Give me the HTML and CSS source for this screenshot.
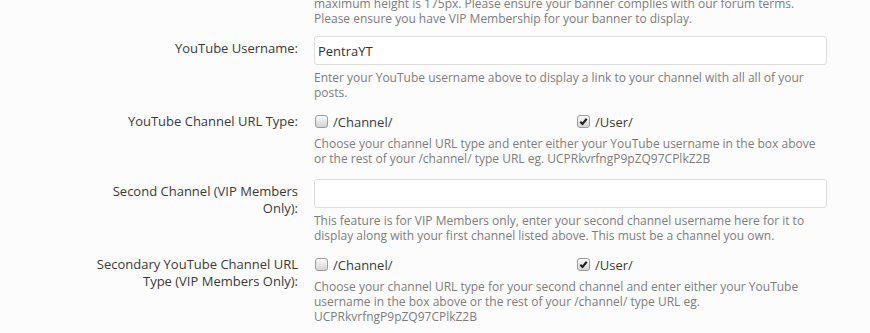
FILE: index.html
```html
<!DOCTYPE html>
<html lang="en">
  <head>
    <meta charset="UTF-8" />
    <title>Preferences</title>
    <link rel="stylesheet" href="styles.css">
  </head>
  <body>
    <form class="prefs">
      <div class="row row-top">
        <div class="label"></div>
        <div class="field">
          <p class="hint">maximum height is 175px. Please ensure your banner complies with our forum terms.<br>Please ensure you have VIP Membership for your banner to display.</p>
        </div>
      </div>

      <div class="row">
        <label class="label label-input" for="yt-user">YouTube Username:</label>
        <div class="field">
          <input id="yt-user" class="text-input" type="text" value="PentraYT" />
          <p class="hint">Enter your YouTube username above to display a link to your channel with all all of your posts.</p>
        </div>
      </div>

      <div class="row">
        <div class="label">YouTube Channel URL Type:</div>
        <div class="field">
          <div class="choices">
            <span class="choice"><span class="check"></span>/Channel/</span>
            <span class="choice"><span class="check checked"><svg viewBox="0 0 12 12"><path d="M2.5 6.3 L4.9 8.7 L9.5 3" /></svg></span>/User/</span>
          </div>
          <p class="hint">Choose your channel URL type and enter either your YouTube username in the box above or the rest of your /channel/ type URL eg. UCPRkvrfngP9pZQ97CPlkZ2B</p>
        </div>
      </div>

      <div class="row">
        <label class="label label-input" for="yt-second">Second Channel (VIP Members Only):</label>
        <div class="field">
          <input id="yt-second" class="text-input" type="text" value="" />
          <p class="hint">This feature is for VIP Members only, enter your second channel username here for it to display along with your first channel listed above. This must be a channel you own.</p>
        </div>
      </div>

      <div class="row">
        <div class="label">Secondary YouTube Channel URL Type (VIP Members Only):</div>
        <div class="field">
          <div class="choices">
            <span class="choice"><span class="check"></span>/Channel/</span>
            <span class="choice"><span class="check checked"><svg viewBox="0 0 12 12"><path d="M2.5 6.3 L4.9 8.7 L9.5 3" /></svg></span>/User/</span>
          </div>
          <p class="hint">Choose your channel URL type for your second channel and enter either your YouTube username in the box above or the rest of your /channel/ type URL eg. UCPRkvrfngP9pZQ97CPlkZ2B</p>
        </div>
      </div>
    </form>
  </body>
</html>
```

FILE: styles.css
```css
body {
  margin: 0;
  background: #fcfcfc;
  font-family: 'Open Sans', sans-serif;
  color: #3a3a3a;
  overflow: hidden;
}

.prefs {
  padding-left: 88px;
}

.row {
  display: grid;
  grid-template-columns: 210px 513px;
  column-gap: 16px;
  margin-bottom: 13px;
}

.row-top {
  margin-top: -4px;
  margin-bottom: 10px;
}

.row-top .hint {
  margin-top: 0;
}

.label {
  text-align: right;
  font-size: 13px;
  line-height: 17px;
}

.label-input {
  padding-top: 4px;
}

.text-input {
  display: block;
  box-sizing: border-box;
  width: 100%;
  height: 29px;
  margin: 0;
  padding: 0 3px;
  border: 1px solid #dcdcdc;
  border-radius: 3px;
  background: #fff;
  font-family: 'Open Sans', sans-serif;
  font-size: 13px;
  color: #333;
  outline: none;
}

.hint {
  margin: 5px 0 0;
  font-size: 12px;
  line-height: 15px;
  color: #7d7d7d;
}

.choices {
  display: grid;
  grid-template-columns: 262px auto;
  padding-top: 1px;
  font-size: 13px;
  line-height: 17px;
}

.choice {
  display: flex;
  align-items: center;
}

.check {
  box-sizing: border-box;
  width: 13px;
  height: 13px;
  margin: 0 5px 2px 1px;
  border: 1px solid #9c9c9c;
  border-radius: 3px;
  background: linear-gradient(#fafafa, #d4d4d4);
  display: flex;
  align-items: center;
  justify-content: center;
}

.check svg {
  width: 11px;
  height: 11px;
}

.check svg path {
  fill: none;
  stroke: #1e1e1e;
  stroke-width: 2.2;
}
```
